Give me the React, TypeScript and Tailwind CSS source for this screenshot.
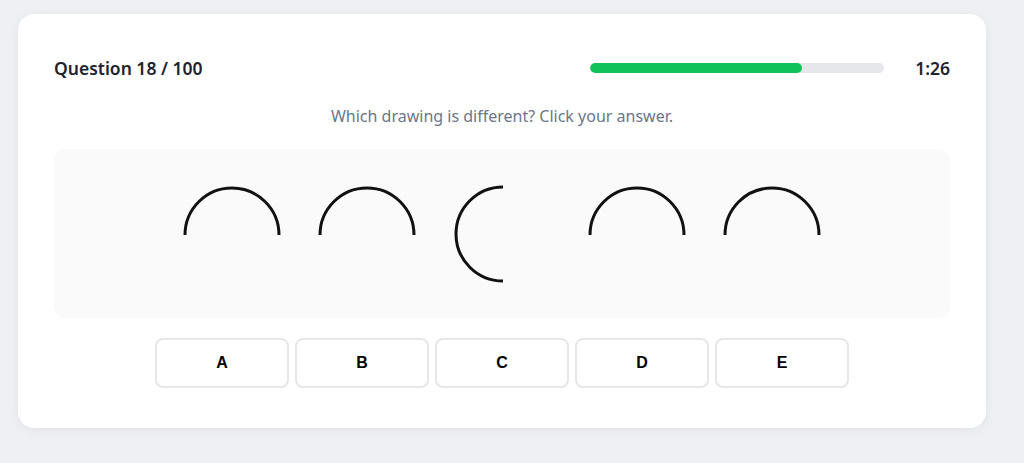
import React from 'react';

const choices = ['A', 'B', 'C', 'D', 'E'];

// rotation of each arc: 0 = opening downward, -90 = opening right
const drawings = [0, 0, -90, 0, 0];

const Arc = ({ rotate }: { rotate: number }) => (
  <svg width="100" height="100" viewBox="0 0 100 100" className="shrink-0">
    <g transform={`rotate(${rotate} 50 50)`}>
      <path d="M3 51 A47 47 0 0 1 97 51" fill="none" stroke="#111" strokeWidth="3" />
    </g>
  </svg>
);

export default function App() {
  return (
    <div className="w-[1024px] h-[463px] bg-[#eef0f4] pt-[14px] pl-[18px] font-['Noto_Sans',sans-serif]">
      <div className="w-[968px] h-[414px] bg-white rounded-2xl shadow-[0_2px_12px_rgba(0,0,0,0.06)] px-9 pt-[35px]">
        <div className="flex items-center h-[38px]">
          <div className="text-[17.5px] font-semibold text-[#1f2330]">Question 18 / 100</div>
          <div className="ml-auto w-[294px] h-[10px] rounded-full bg-[#e5e7eb] overflow-hidden">
            <div className="h-full bg-[#0fc25a] rounded-full" style={{ width: '72%' }} />
          </div>
          <div className="w-[66px] text-right text-[17.5px] font-semibold text-[#1f2330]">1:26</div>
        </div>
        <p className="mt-[18px] text-center text-[16px] leading-[22px] text-[#6b7689]">
          Which drawing is different? Click your answer.
        </p>
        <div className="mt-[22px] h-[169px] bg-[#fafafa] rounded-xl flex items-center justify-center gap-[35px]">
          {drawings.map((r, i) => (
            <Arc key={i} rotate={r} />
          ))}
        </div>
        <div className="mt-[20px] flex justify-center gap-[6px]">
          {choices.map((c) => (
            <button
              key={c}
              className="w-[134px] h-[50px] bg-white border-2 border-[#e5e7eb] rounded-lg font-['Liberation_Sans',Arial,sans-serif] font-bold text-[16px] text-black"
            >
              {c}
            </button>
          ))}
        </div>
      </div>
    </div>
  );
}
